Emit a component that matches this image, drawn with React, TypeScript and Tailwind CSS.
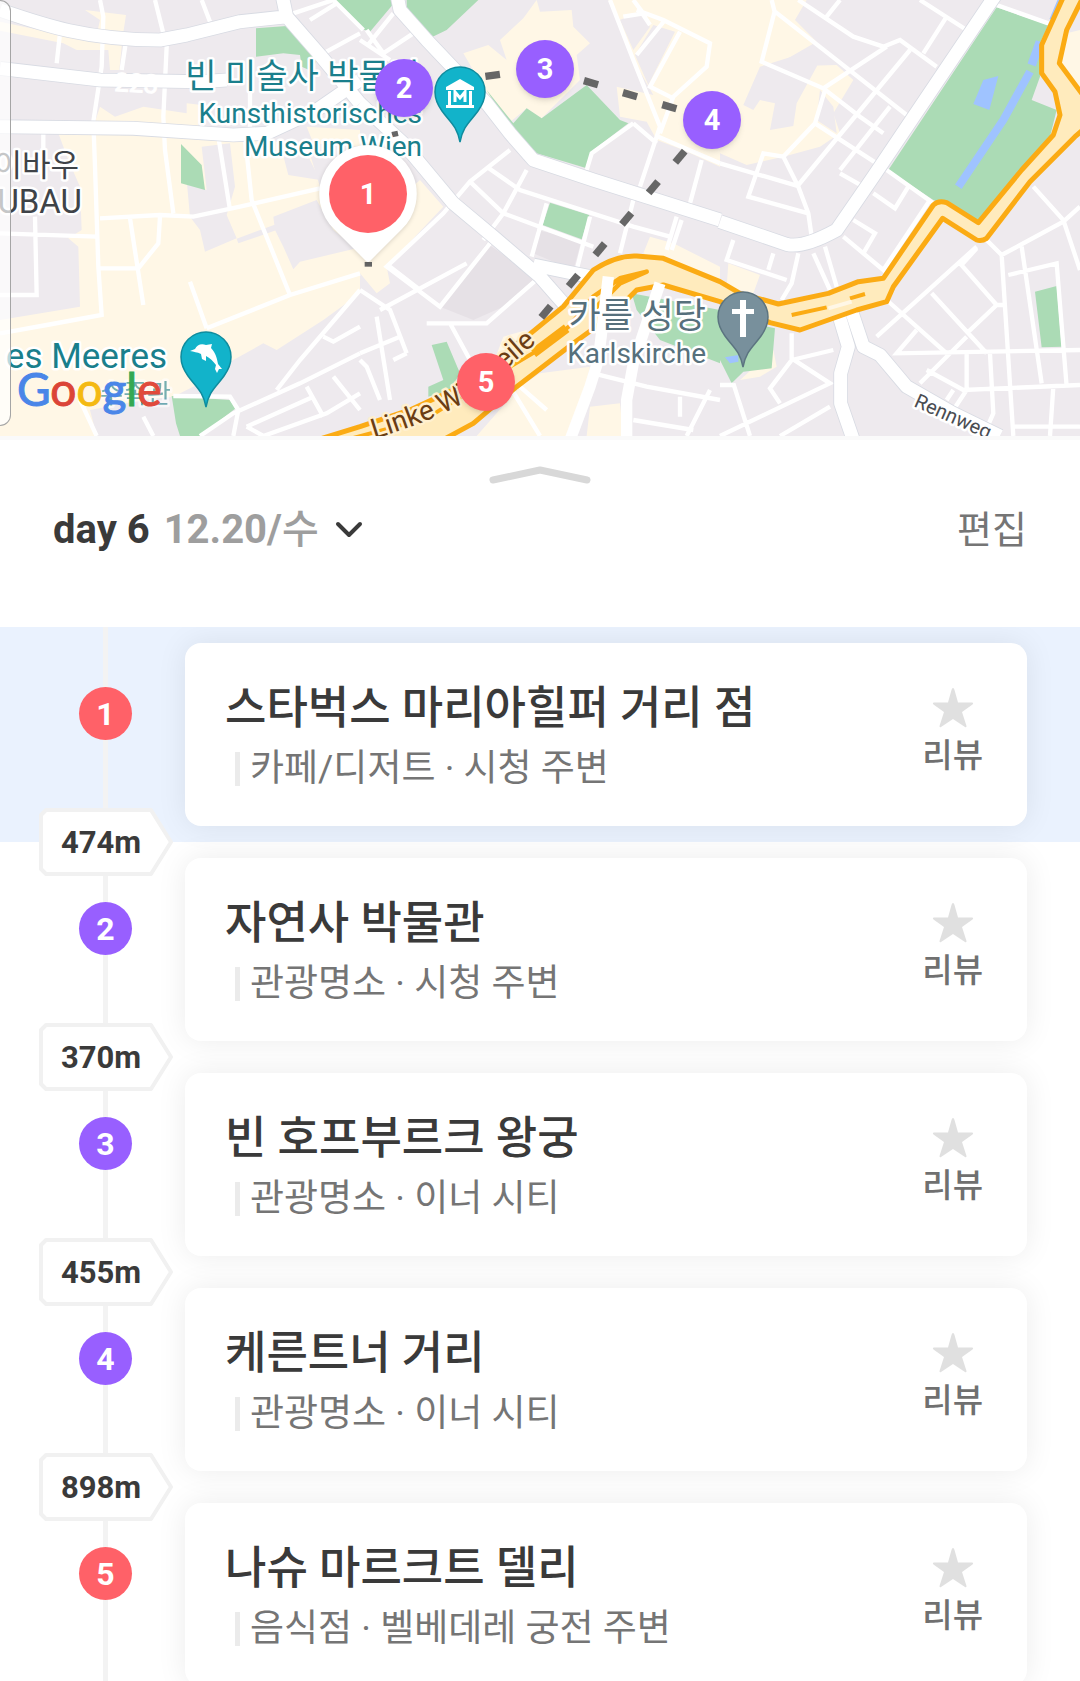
import React, { useState } from 'react';
import { clsx } from 'clsx';

type Kind = 'food' | 'sight';

const places: { id: number; kind: Kind; name: string; category: string; area: string; next?: string; pin: string }[] = [
  { id: 1, kind: 'food', name: '스타벅스 마리아힐퍼 거리 점', category: '카페/디저트', area: '시청 주변', next: '474m', pin: '' },
  { id: 2, kind: 'sight', name: '자연사 박물관', category: '관광명소', area: '시청 주변', next: '370m', pin: 'left-[375px] top-[59px]' },
  { id: 3, kind: 'sight', name: '빈 호프부르크 왕궁', category: '관광명소', area: '이너 시티', next: '455m', pin: 'left-[516px] top-[40px]' },
  { id: 4, kind: 'sight', name: '케른트너 거리', category: '관광명소', area: '이너 시티', next: '898m', pin: 'left-[683px] top-[91px]' },
  { id: 5, kind: 'food', name: '나슈 마르크트 델리', category: '음식점', area: '벨베데레 궁전 주변', pin: 'left-[457px] top-[353px]' },
];

const kindColor = { food: 'bg-[#ff6168]', sight: 'bg-[#985fff]' };

// three map tiles, 1080 units wide each, drawn side by side at one third scale
const tiles = [
  {
    cream:
      'M0 65L190 105L285 125L300 60L255 30L378 45L368 110L358 210H330L325 150L230 150L190 130L0 92ZM175 400L500 410L920 430L960 560L1080 700V1308H0V960L240 920L235 740L205 715L245 690L240 560L205 480ZM300 320L345 350L430 320L560 340V310L605 315L590 410H270ZM920 380L1080 390V440L940 430Z',
    block:
      'M560 540L620 570L605 440L690 430L705 560L680 645L710 715L615 755L600 690L570 650ZM820 650L950 600L1000 690L1070 745L900 785L880 808L850 740L825 690ZM710 716L830 672V690L715 730ZM840 430L900 400L930 480L960 540L865 525ZM1080 880V1308H540L520 1190L600 1150L700 1080L790 1030L830 1050L970 960ZM270 1230L430 1200L520 1190L540 1308H290Z',
    dark: '',
    green:
      'M543 432L605 495L615 570L543 550ZM515 1188L690 1200L707 1225L600 1308H540L528 1270ZM768 85L860 78L950 170L940 215L905 200L900 165L850 160L768 170ZM1005 0H1190L1110 95L1080 85Z',
    minor:
      'M300 0L310 50L305 200L280 365L285 500L295 800L305 945L140 975L0 1000M465 0L500 140L490 350L495 450L520 640M180 100L170 190M605 0L630 65M300 655L480 645L580 650L720 620L960 565M390 655L430 915M480 650L475 730L415 805H300M655 410L690 630M735 410L755 600L870 885M620 985L870 885L1080 820M570 845L620 985M105 650L110 885H0M0 700L290 710M130 400V470M1080 870L900 1080L830 1170M970 1010L1000 1025L1080 980M750 400V240M1080 1060L900 1150L700 1240L600 1308M520 1188L690 1190L715 1230L700 1308M920 1160L970 1250M740 1280L940 1190M740 1280L790 1308L980 1240L1080 1180M1000 1130L1080 1230M240 1200L290 1308M430 1250L460 1308M880 40L1000 0L1090 90M930 60L1010 10M970 160L1080 100M380 110L365 210M605 400L610 310',
    medium: '',
    major:
      'M0 30C130 75 260 120 480 120L560 105L720 65L860 50M0 205L300 240L600 245L680 240M0 380L400 385L700 405L800 400L950 330L1080 240M845 -20L860 50L960 165L1080 310',
  },
  {
    cream:
      'M420 120L490 55L530 0L540 35L635 30L640 80L690 130L650 165L660 240L545 355L500 325L455 362L380 280L310 160L385 135L440 180ZM745 0H1080V500L970 450L890 420L860 365L780 350L770 260L880 285L820 180ZM180 540L250 620L80 800L90 850L50 880L0 820V700ZM870 710L940 730L1080 800V850L930 790L850 760ZM540 1120L690 1100L640 1308H350L480 1160ZM690 1220L780 1210L790 1308H680ZM430 1010L500 990L500 1040L400 1090Z',
    block: 'M880 75L945 95L865 255L825 165ZM780 60L835 35L870 80L820 150Z',
    dark: 'M380 730L530 830L430 920L340 960L240 920ZM530 690L665 720L640 810L520 760Z',
    green:
      'M140 0H355L260 90L215 112L140 30ZM380 270L460 370L500 325L545 355L680 255L780 360L805 370L700 450L680 505L530 460L440 370ZM570 608L688 645L665 718L548 675ZM215 1035L260 1025L300 1120L270 1170L205 1190V1160L250 1140ZM815 880L1080 930V1090L900 1020L830 930Z',
    minor:
      'M450 450L330 545L250 640L80 800L240 920L390 730M330 545L430 640L700 740M380 500L480 570L820 680L930 710M500 510L430 640L370 720M560 610L515 770M690 650L650 810M820 600L780 760M200 970H380L540 830M270 970L330 1080M0 870L90 930L140 1060M0 1060L120 1010M90 800L180 870M320 790L60 930M50 950L90 1200M140 1060L100 1080M0 1080L20 1100L60 1200M750 0L820 180L900 380L840 560M830 30L910 60L1050 130L1040 200L940 290L900 400M915 60L830 165M960 95L870 260L940 295M895 410L1080 490M820 370L890 430M820 370L695 460L680 510M1025 480L990 610M950 650L920 750M965 660L935 750M700 1120L860 1160L1080 1200M960 1190V1250M1050 1170L980 1308M820 1260L1000 1290M420 1110L540 1308M480 1160L560 1230M20 140L100 40M20 90L70 160L160 100M0 120L90 180M790 50L850 40L820 0M840 30L870 75',
    medium: 'M745 830L715 1080L690 1160L630 1320M900 850L820 1090L800 1200V1320',
    major:
      'M110 -20L120 30L200 120L380 310L450 400L520 480L700 540L1080 660M0 310L130 430L280 610L400 710L540 830L610 910M520 795L690 830',
  },
  {
    cream:
      'M0 0H260L225 60L290 125L160 200L350 195L400 240L340 340L360 400L300 440L190 470L80 495L0 460ZM25 790L120 825L100 880L20 860ZM1040 100L1080 90V270L1020 190ZM160 1050L170 1100L120 1130L60 1140Z',
    block: 'M120 200L310 140L290 200L230 310L220 378L150 390L165 310L120 300L100 330L70 315ZM300 270L340 320L350 400L290 360Z',
    dark: '',
    green:
      'M830 22L985 75L960 130V230L935 300L1010 330L990 410L905 510L775 660L640 600L505 510ZM945 875L1010 858L1025 1040L965 1042ZM0 950L165 985L155 1105L70 1115L35 1150L0 1080Z',
    minor:
      'M235 0L400 110L490 140L540 120L650 200M360 0L320 50M600 0L740 90M680 50L610 160M165 30L125 185L310 265L420 350L490 400M165 35L560 345M310 265L500 140M315 270L285 370L190 470L235 560L265 640L275 710M0 490L240 560M190 470L130 460L85 590L265 640M570 150L235 555M510 320L360 510M285 370L470 490M360 520L430 560M500 510L640 610M630 600L490 810L370 710M460 580L525 625L565 560M400 660L465 700L430 760M40 720L20 780L200 840M160 760L145 810M235 760L215 850L185 900M280 760L330 870M315 740L350 860M500 900L680 1060M770 740L470 1010M790 710L845 765L1030 665L1080 620M940 560L1030 660L1080 810M845 765L880 1308M720 790L830 915H855M830 915L740 1000M770 745L720 800M635 880L745 1000L800 1060M590 990L530 1060L1080 1050M740 1060V1170M810 1060L820 1240L790 1308M600 1150L740 1010M620 1110L730 1170L1080 1155M865 825L1010 790L1040 1160M905 740L965 1150M1000 1160L990 1308M880 1280H1080M215 1000V1080L150 1165L180 1210M215 1080L340 1050M215 1075L330 1150L0 1308M40 1150L90 1308M0 1155H40M330 1220L180 1308M700 1170L680 1200M740 1170L700 1230M830 15L985 70M165 40L155 0',
    medium: '',
    major:
      'M0 665L200 733Q250 745 350 690L460 530L830 -20M355 940L385 1040L362 1120V1210L400 1320M395 935L430 1040L480 1065L560 1160L700 1240L840 1308',
  },
];

const highway =
  'M-130 1320L0 1280L150 1230L300 1160L500 1010L610 920L700 810Q770 765 830 768L910 775L1080 845L1140 880L1255 912L1405 880L1495 845L1570 835L1720 615Q1735 600 1760 608L1855 668L1985 510L2080 405L2100 345L2085 275L2045 220V135L2115 -20H2175L2120 90L2098 190L2180 300V380L2145 410L2010 545L1880 715Q1865 725 1850 720L1748 655L1600 860L1580 905L1490 930L1320 990L1230 968L1080 905L910 855L830 870L750 950L640 1030L470 1160L340 1270L230 1330Z';

const dashes = [
  [1478, 226, -8], [1773, 248, 16], [1890, 284, 16], [2008, 320, 16],
  [2040, 470, -50], [1960, 562, -50], [1880, 656, -50], [1800, 748, -50],
  [1720, 842, -50], [1638, 935, -50], [1565, 1022, -50],
];

function Poi({ x, y, fill, edge, children }: { x: number; y: number; fill: string; edge: string; children: React.ReactNode }) {
  return (
    <g transform={`translate(${x} ${y})`}>
      <path d="M0 50C-3 34 -10 30 -18 19C-23 12 -25 7 -25 0A25 25 0 0 1 25 0C25 7 23 12 18 19C10 30 3 34 0 50Z" fill={fill} stroke={edge} strokeWidth="1.5" />
      {children}
    </g>
  );
}

function CityMap() {
  const layer = (key: keyof (typeof tiles)[number]) =>
    tiles.map((tile, i) => <path key={i} d={tile[key]} transform={`translate(${i * 1080} 0)`} />);

  return (
    <svg viewBox="0 0 1080 436" preserveAspectRatio="xMidYMid slice" className="block h-full w-full bg-[#eeeaee]" role="img" aria-label="빈 지도">
      <g transform="scale(0.33333)">
        <g fill="#fff7e6">{layer('cream')}</g>
        <g fill="#eeeaee">{layer('block')}</g>
        <g fill="#e6e1e6">{layer('dark')}</g>
        <g fill="#abdbb5">{layer('green')}</g>
        <g fill="none" stroke="#9fc3ff">
          <path d="M2875 560L3010 360L3090 215" strokeWidth="24" />
          <path d="M3095 195L3120 125" strokeWidth="26" />
          <path d="M3155 60L3180 0" strokeWidth="14" />
        </g>
        <path d="M2950 240L2995 228L2968 330L2920 312ZM2175 1072L2215 1065V1085L2190 1090Z" fill="#9fc3ff" />
        <g fill="none" stroke="#fff" strokeWidth="13">{layer('minor')}</g>
        <g fill="none" strokeLinejoin="round">
          <g stroke="#d8dbe3" strokeWidth="44">{layer('major')}</g>
          <g stroke="#fff" strokeWidth="39">{layer('major')}</g>
        </g>
        <g transform="translate(1080 0)" fill="none" strokeLinejoin="round">
          <path d={highway} fill="#ffebbd" stroke="#fbab14" strokeWidth="15" />
          <path d="M-80 1330L200 1255L400 1130L560 1035L650 960" stroke="#fbab14" strokeWidth="12" />
          <path d="M520 1060L620 985" stroke="#fbab14" strokeWidth="28" />
          <path d="M640 965L700 890L780 835L860 815L780 850L700 930" stroke="#fbab14" strokeWidth="14" />
          <path d="M1295 945L1400 922M1470 895L1515 882" stroke="#fbab14" strokeWidth="12" />
          <path d="M1405 925L1475 905" stroke="#fff7e6" strokeWidth="12" />
        </g>
        <g fill="none" stroke="#fff" strokeWidth="34">{layer('medium')}</g>
        <g stroke="#666" strokeWidth="22">
          {dashes.map(([x, y, angle]) => (
            <path key={`${x}-${y}`} d="M-22 0H22" transform={`translate(${x} ${y}) rotate(${angle})`} />
          ))}
          <path d="M1176 404L1194 400" strokeWidth="16" />
          <path d="M1094 793H1116" strokeWidth="14" />
        </g>
      </g>

      <g stroke="#fff" strokeWidth="5" strokeLinejoin="round" paintOrder="stroke" className="font-['Roboto','Noto_Sans_CJK_KR',sans-serif]">
        <text x="114" y="91" fontSize="26" fill="#fff" strokeWidth="1" transform="rotate(3 114 91)">223</text>
        <g fill="#1a7f8c" textAnchor="end">
          <text x="421" y="88" fontSize="34">빈 미술사 박물관</text>
          <text x="422" y="123" fontSize="28">Kunsthistorisches</text>
          <text x="422" y="156" fontSize="28">Museum Wien</text>
          <text x="167" y="368" fontSize="35">es Meeres</text>
          <text x="171" y="403" fontSize="26" opacity="0.6">수족관</text>
        </g>
        <g fill="#3f4348" textAnchor="end">
          <text x="79" y="176" fontSize="31">노이바우</text>
          <text x="82" y="213" fontSize="33">NEUBAU</text>
        </g>
        <g fill="#56707c" textAnchor="end">
          <text x="706" y="328" fontSize="35">카를 성당</text>
          <text x="706" y="363" fontSize="28">Karlskirche</text>
        </g>
        <path id="wienzeile" d="M374 439Q450 416 480 391T545 335" fill="none" stroke="none" />
        <text fontSize="28" fill="#6b3d13" stroke="#fff0cf">
          <textPath href="#wienzeile">Linke Wienzeile</textPath>
        </text>
        <text x="913" y="406" fontSize="20" fill="#4a4d52" transform="rotate(24 913 406)">Rennweg</text>
      </g>

      <Poi x={460} y={92} fill="#12b3ca" edge="#0f8c9e">
        <path d="M0 -13L14 -5V-2H-14V-5ZM-12 -1H-9V13H-12ZM9 -1H12V13H9ZM-14 13H14V16H-14Z" fill="#fff" />
        <path d="M-5 10V0L0 6L5 0V10" fill="none" stroke="#fff" strokeWidth="3" />
      </Poi>
      <Poi x={206} y={357} fill="#12b3ca" edge="#0f8c9e">
        <path d="M-16 -6L-11 -8C-9 -12 -5 -14 0 -12L6 -13L5 -9C10 -4 11 2 12 7L16 12L13 12L11 16L9 12L10 8C7 4 4 1 0 -1L0 4L-4 2L-5 -3C-9 -5 -12 -5 -16 -6Z" fill="#fff" />
      </Poi>
      <Poi x={743} y={317} fill="#78909c" edge="#5c7480">
        <path d="M-3 -17H3V-8H11V-3H3V20H-3V-3H-11V-8H-3Z" fill="#fff" />
      </Poi>
      <path d="M368 145A49 49 0 0 1 402 229L370 261Q368 263 366 261L334 229A49 49 0 0 1 368 145Z" fill="#fff" className="drop-shadow-sm" />

      <text x="17" y="406" fontSize="46" className="font-[Lato,sans-serif]" strokeWidth="1">
        <tspan fill="#4a86e8" stroke="#4a86e8">G</tspan>
        <tspan fill="#db4437" stroke="#db4437">o</tspan>
        <tspan fill="#f4b912" stroke="#f4b912">o</tspan>
        <tspan fill="#4a86e8" stroke="#4a86e8">g</tspan>
        <tspan fill="#34a853" stroke="#34a853">l</tspan>
        <tspan fill="#e04a3c" stroke="#e04a3c">e</tspan>
      </text>
    </svg>
  );
}

export default function App() {
  const [selected, setSelected] = useState(1);

  return (
    <div className="flex h-screen flex-col overflow-hidden bg-white font-['Roboto','Noto_Sans_CJK_KR',sans-serif] text-[#3a3a3a]">
      <div className="relative h-[436px] shrink-0 overflow-hidden">
        <CityMap />
        <div className="absolute top-0 left-0 h-[426px] w-[11px] rounded-r-xl border border-l-0 border-[#a5a5a5] bg-white/70" />
        {places.map((place) => (
          <button
            key={place.id}
            onClick={() => setSelected(place.id)}
            aria-label={place.name}
            className={clsx(
              'absolute flex items-center justify-center rounded-full text-[29px] leading-none font-bold text-white',
              kindColor[place.kind],
              place.id === 1 ? 'top-[155px] left-[329px] size-[78px]' : 'size-[58px] shadow-md',
              place.pin
            )}
          >
            {place.id}
          </button>
        ))}
      </div>

      <div className="shrink-0 border-t-4 border-[#fafafa]">
        <button aria-label="목록 펼치기" className="mx-auto mt-[25px] block">
          <svg width="102" height="20" viewBox="0 0 102 20" fill="none">
            <path d="M4 15L51 5L98 15" stroke="#d8d8d8" strokeWidth="7" strokeLinecap="round" strokeLinejoin="round" />
          </svg>
        </button>
        <header className="mb-[52px] flex h-[90px] items-center justify-between px-[53px]">
          <button aria-haspopup="listbox" className="flex items-center text-[40px] leading-[48px] font-bold">
            <span>day 6</span>
            <span className="ml-3.5 text-[#9e9e9e]">
              12.20/<span className="font-medium">수</span>
            </span>
            <svg width="28" height="20" viewBox="0 0 28 20" fill="none" className="ml-4">
              <path d="M3 4L14 15L25 4" stroke="#3a3a3a" strokeWidth="4" strokeLinecap="round" strokeLinejoin="round" />
            </svg>
          </button>
          <button className="text-[38px] leading-[48px] text-[#757575]">편집</button>
        </header>
      </div>

      <ol className="min-h-0 flex-1 overflow-y-auto [scrollbar-width:none]">
        {places.map((place) => (
          <li key={place.id} className={clsx('relative flex pr-[53px]', place.id === selected && 'bg-[#eaf2fe]')}>
            <div className="relative w-[185px] shrink-0 pt-[60px] pl-[79px]">
              <div className="absolute top-0 bottom-0 left-[103px] w-[5px] bg-[#f3f3f3]" />
              <div className={clsx('relative flex size-[53px] items-center justify-center rounded-full text-[32px] leading-[50px] font-bold text-white', kindColor[place.kind])}>
                {place.id}
              </div>
            </div>

            <article className="my-4 flex min-w-0 flex-1 items-start justify-between rounded-2xl bg-white pt-[38px] pr-11 pb-[31px] pl-10 shadow-[0_0_30px_rgba(0,0,0,0.08)]">
              <div className="min-w-0">
                <h2 className="truncate text-[45px] leading-[56px] font-medium">{place.name}</h2>
                <p className="mt-[6px] flex items-center pl-[10px] text-[37px] leading-[52px] text-[#757575]">
                  <span className="mr-[10px] h-[34px] w-[5px] bg-[#ebebeb]" />
                  {place.category} · {place.area}
                </p>
              </div>
              <button className="mt-[6px] flex shrink-0 flex-col items-center gap-[5px] text-[33px] leading-[44px] font-medium text-[#707070]">
                <svg width="42" height="42" viewBox="0 0 42 42" fill="#e0e0e0">
                  <path d="M21 1Q22 1 22.500 3L26 15.500H40Q42 16 40.500 17.500L30 25L34.500 39Q34.500 41 33 40L21 32L9 40Q7.500 41 7.500 39L12 25L1.500 17.500Q0 16 2 15.500H16L19.500 3Q20 1 21 1Z" />
                </svg>
                리뷰
              </button>
            </article>

            {place.next && (
              <div className="absolute -bottom-[34px] left-[39px] z-10 flex h-[68px] w-[134px] items-center pl-[22px]">
                <svg width="134" height="68" viewBox="0 0 134 68" className="absolute inset-0">
                  <path d="M7 2H112L132 34L112 66H7L2 61V7Z" fill="#fff" stroke="#f1f1f1" strokeWidth="4" strokeLinejoin="round" />
                </svg>
                <span className="relative text-[31px] leading-none font-bold">{place.next}</span>
              </div>
            )}
          </li>
        ))}
      </ol>
    </div>
  );
}
